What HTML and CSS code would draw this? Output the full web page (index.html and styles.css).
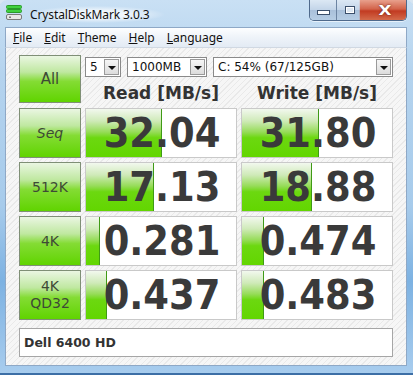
FILE: index.html
```html
<!DOCTYPE html>
<html lang="en">
<head>
    <meta charset="UTF-8">
    <title>CrystalDiskMark 3.0.3</title>
    <link rel="stylesheet" href="styles.css">
</head>
<body>
    <div class="window">
        <div class="titlebar">
            <svg class="app-icon" width="16" height="16" viewBox="0 0 16 16">
                <rect x="0.5" y="0.5" width="15" height="3" rx="1" fill="#3fd13f" stroke="#2a9a2a"/>
                <rect x="0.5" y="4.5" width="15" height="3" rx="1" fill="#3fd13f" stroke="#2a9a2a"/>
                <rect x="0.5" y="9.5" width="15" height="5" rx="1.5" fill="#e8e8e8" stroke="#7a7a7a"/>
                <rect x="3" y="11.5" width="2" height="1.5" fill="#7a7a7a"/>
            </svg>
            <span class="title">CrystalDiskMark 3.0.3</span>
            <div class="caption-buttons">
                <div class="cap-btn min"><span class="min-glyph"></span></div>
                <div class="cap-btn max"><span class="max-glyph"></span></div>
                <div class="cap-btn close">X</div>
            </div>
        </div>
        <div class="menubar">
            <span class="menu-item"><u>F</u>ile</span>
            <span class="menu-item"><u>E</u>dit</span>
            <span class="menu-item"><u>T</u>heme</span>
            <span class="menu-item"><u>H</u>elp</span>
            <span class="menu-item"><u>L</u>anguage</span>
        </div>
        <div class="client">
            <div class="grid">
                <div class="btn btn-all">All</div>
                <div class="top-right">
                    <div class="combos">
                        <div class="combo combo-count"><span>5</span><i class="drop"></i></div>
                        <div class="combo combo-size"><span>1000MB</span><i class="drop"></i></div>
                        <div class="combo combo-drive"><span>C: 54% (67/125GB)</span><i class="drop"></i></div>
                    </div>
                    <div class="headers">
                        <div class="head">Read [MB/s]</div>
                        <div class="head">Write [MB/s]</div>
                    </div>
                </div>

                <div class="btn btn-seq">Seq</div>
                <div class="cell"><div class="bar" style="width: 75px"></div><span class="num">32.04</span></div>
                <div class="cell"><div class="bar" style="width: 76px"></div><span class="num">31.80</span></div>

                <div class="btn">512K</div>
                <div class="cell"><div class="bar" style="width: 67px"></div><span class="num">17.13</span></div>
                <div class="cell"><div class="bar" style="width: 69px"></div><span class="num">18.88</span></div>

                <div class="btn">4K</div>
                <div class="cell"><div class="bar" style="width: 13px"></div><span class="num">0.281</span></div>
                <div class="cell"><div class="bar" style="width: 21px"></div><span class="num">0.474</span></div>

                <div class="btn btn-two">4K<br>QD32</div>
                <div class="cell"><div class="bar" style="width: 20px"></div><span class="num">0.437</span></div>
                <div class="cell"><div class="bar" style="width: 21px"></div><span class="num">0.483</span></div>

                <div class="comment">Dell 6400 HD</div>
            </div>
        </div>
    </div>
</body>
</html>
```

FILE: styles.css
```css
body {
    margin: 0;
    background: #d8e6f2;
    font-family: "DejaVu Sans", Verdana, sans-serif;
}
.window {
    width: 413px;
    height: 375px;
    box-sizing: border-box;
    padding: 0 6px 9px 5px;
    display: flex;
    flex-direction: column;
    border-radius: 7px 7px 0 0;
    background: linear-gradient(180deg, #c9e0f4 0%, #b4d3ee 20%, #a7cbeb 55%, #7db2e2 75%, #a9cdee 100%);
    box-shadow: inset 0 -2px 0 #3d6fa6;
}
.titlebar {
    height: 27px;
    display: flex;
    align-items: flex-start;
    flex-shrink: 0;
}
.app-icon {
    margin: 5px 0 0 1px;
}
.title {
    margin: 6px 0 0 6px;
    font-family: "Noto Sans", "Open Sans", sans-serif;
    font-size: 12px;
    letter-spacing: -0.1px;
    color: #111;
    padding: 0 14px 0 2px;
    background: radial-gradient(ellipse at center, rgba(255,255,255,0.75) 30%, rgba(255,255,255,0) 72%);
}
.caption-buttons {
    margin-left: auto;
    display: flex;
    height: 20px;
    border: 1px solid #4f6a8c;
    border-top: none;
    border-radius: 0 0 5px 5px;
    overflow: hidden;
    box-shadow: 0 1px 0 rgba(255,255,255,0.6);
}
.cap-btn {
    height: 20px;
    display: flex;
    align-items: center;
    justify-content: center;
}
.cap-btn.min,
.cap-btn.max {
    width: 26px;
    background: linear-gradient(180deg, #dce8f4 0%, #c2d4e8 50%, #a9c0da 51%, #b6cde4 100%);
    border-right: 1px solid #6c84a2;
}
.min-glyph {
    width: 11px;
    height: 3px;
    margin-top: 5px;
    background: #fff;
    border: 1px solid #3b4f6a;
}
.max-glyph {
    width: 8px;
    height: 6px;
    border: 1px solid #3b4f6a;
    box-shadow: inset 0 0 0 1px #fff;
    background: #dfe8f2;
}
.cap-btn.close {
    width: 42px;
    background: linear-gradient(180deg, #e8a08c 0%, #d2634a 45%, #c23b22 55%, #d36a4a 100%);
    color: #fff;
    font-family: "DejaVu Sans", sans-serif;
    font-weight: bold;
    font-size: 14px;
    transform: scaleX(1.2);
    text-shadow: 0 0 2px #5a1a10;
}
.menubar {
    height: 21px;
    flex-shrink: 0;
    display: flex;
    align-items: center;
    padding-left: 7px;
    box-sizing: border-box;
    border: 1px solid #8ea8c6;
    border-bottom: 1px solid #d0d8e2;
    background: linear-gradient(180deg, #fdfeff 0%, #eef3f9 50%, #e3ebf4 100%);
    font-family: "Noto Sans", "Open Sans", sans-serif;
    font-size: 12px;
    color: #111;
}
.menu-item {
    margin-right: 12px;
}
.client {
    flex: 1;
    border: 1px solid #8ea8c6;
    border-top: none;
    padding: 7px 0 0 13px;
    background: repeating-linear-gradient(135deg, #f6f6f6 0px, #f6f6f6 3px, #e9e9e9 3px, #e9e9e9 4px);
}
.grid {
    display: grid;
    grid-template-columns: 62px 152px 152px;
    grid-template-rows: 49px 50px 50px 50px 50px 33px;
    column-gap: 4px;
    row-gap: 4px;
}
.btn {
    box-sizing: border-box;
    border: 1px solid #7f8f76;
    background: linear-gradient(180deg, #eaf6e2 0%, #bfe8a0 35%, #84dc34 55%, #60d400 100%);
    display: flex;
    align-items: center;
    justify-content: center;
    text-align: center;
    font-size: 14px;
    color: #3e4a36;
    line-height: 17px;
}
.btn-all {
    height: 48px;
    font-size: 15px;
}
.btn-seq {
    font-style: italic;
}
.top-right {
    grid-column: 2 / 4;
    display: flex;
    flex-direction: column;
}
.combos {
    display: flex;
    gap: 6px;
    margin-top: 2px;
}
.combo {
    height: 20px;
    box-sizing: border-box;
    border: 1px solid #8a8a8a;
    background: #fff;
    display: flex;
    align-items: center;
    justify-content: space-between;
    padding: 0 1px 0 4px;
    font-size: 12px;
    color: #111;
}
.combo-count { width: 36px; }
.combo-size { width: 80px; }
.combo-drive { width: 180px; }
.drop {
    width: 15px;
    height: 16px;
    box-sizing: border-box;
    border: 1px solid #9a9a9a;
    background: linear-gradient(180deg, #f6f6f6, #dcdcdc);
    position: relative;
}
.drop::after {
    content: "";
    position: absolute;
    left: 3px;
    top: 6px;
    border-left: 4px solid transparent;
    border-right: 4px solid transparent;
    border-top: 4px solid #111;
}
.headers {
    display: grid;
    grid-template-columns: 152px 152px;
    column-gap: 4px;
    margin-top: 6px;
}
.head {
    text-align: center;
    font-weight: bold;
    font-size: 17px;
    color: #333;
}
.cell {
    position: relative;
    box-sizing: border-box;
    border: 1px solid #c9c9c9;
    background: #fff;
    display: flex;
    align-items: center;
    justify-content: center;
    overflow: hidden;
}
.bar {
    position: absolute;
    left: 0;
    top: 0;
    bottom: 0;
    border-right: 1px solid #3f9a16;
    background: linear-gradient(180deg, #f2f8ee 0%, #cfeab8 25%, #96dc58 48%, #6cd810 60%, #62d600 100%);
}
.num {
    position: relative;
    font-family: "DejaVu Sans Condensed", "DejaVu Sans", sans-serif;
    font-stretch: condensed;
    font-weight: bold;
    font-size: 41px;
    color: #3a3a3a;
    margin-left: 2px;
}
.comment {
    grid-column: 1 / 4;
    margin-top: 4px;
    box-sizing: border-box;
    border: 1px solid #a6a6a6;
    background: #fff;
    display: flex;
    align-items: center;
    padding-left: 4px;
    font-weight: bold;
    font-size: 12.5px;
    color: #333;
}
```
